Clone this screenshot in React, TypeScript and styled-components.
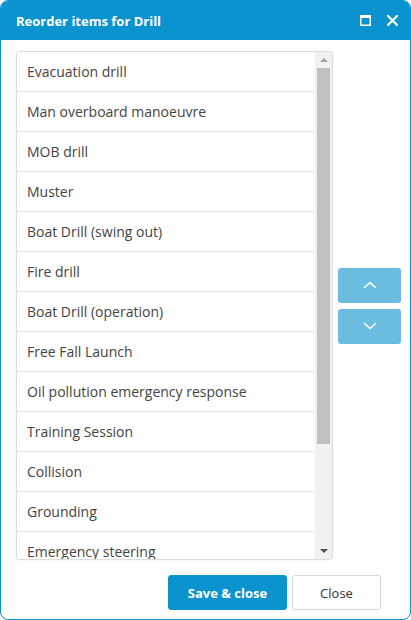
import React from "react";
import styled, { createGlobalStyle } from "styled-components";

const GlobalStyle = createGlobalStyle`
  html, body {
    margin: 0;
    padding: 0;
    background: #ffffff;
  }
  body {
    font-family: "Open Sans", "Liberation Sans", sans-serif;
  }
`;

const Window = styled.div`
  width: 411px;
  height: 620px;
  box-sizing: border-box;
  border: 1px solid #0b93d0;
  border-radius: 8px;
  overflow: hidden;
  display: flex;
  flex-direction: column;
  background: #ffffff;
`;

const Header = styled.div`
  height: 39px;
  background-color: #0b93d0;
  display: flex;
  align-items: center;
  padding: 0 12px 0 15px;
  color: #ffffff;
`;

const Title = styled.span`
  flex: 1;
  font-size: 13px;
  font-weight: 700;
`;

const HeaderIcons = styled.div`
  display: flex;
  align-items: center;
  gap: 16px;
  svg {
    display: block;
  }
`;

const Body = styled.div`
  display: flex;
  align-items: center;
  gap: 5px;
  padding: 11px 9px 0 15px;
`;

const ListBox = styled.div`
  width: 317px;
  height: 509px;
  box-sizing: border-box;
  border: 1px solid #dcdcdc;
  border-radius: 3px;
  display: flex;
  overflow: hidden;
  box-shadow: 0 1px 2px rgba(0, 0, 0, 0.04);
`;

const Items = styled.ul`
  flex: 1;
  margin: 0;
  padding: 0;
  list-style: none;
  overflow: hidden;
`;

const Item = styled.li`
  height: 40px;
  box-sizing: border-box;
  border-bottom: 1px solid #e3e3e3;
  display: flex;
  align-items: center;
  padding: 0 0 1px 10px;
  font-size: 14px;
  color: #444444;
  white-space: nowrap;
`;

const ScrollTrack = styled.div`
  width: 17px;
  background: #f1f1f1;
  display: flex;
  flex-direction: column;
  align-items: center;
`;

const ScrollArrow = styled.div<{ down?: boolean }>`
  height: 16px;
  width: 100%;
  display: flex;
  align-items: center;
  justify-content: center;
  &::after {
    content: "";
    border-left: 4px solid transparent;
    border-right: 4px solid transparent;
    ${(props) =>
      props.down
        ? "border-top: 4px solid #505050;"
        : "border-bottom: 4px solid #a3a3a3;"}
  }
`;

const ScrollThumb = styled.div`
  width: 13px;
  height: 376px;
  background: #c1c1c1;
`;

const ScrollRest = styled.div`
  flex: 1;
`;

const MoveButtons = styled.div`
  display: flex;
  flex-direction: column;
  gap: 6px;
`;

const MoveButton = styled.button`
  width: 63px;
  height: 35px;
  border: none;
  border-radius: 3px;
  background: #6bbddf;
  display: flex;
  align-items: center;
  justify-content: center;
  padding: 0;
  cursor: pointer;
  svg {
    display: block;
  }
`;

const Footer = styled.div`
  display: flex;
  justify-content: flex-end;
  gap: 5px;
  padding: 15px 29px 0 0;
`;

const FooterButton = styled.button<{ primary?: boolean }>`
  height: 35px;
  box-sizing: border-box;
  border-radius: 3px;
  font-family: "Open Sans", "Liberation Sans", sans-serif;
  font-size: 13px;
  font-weight: ${(props) => (props.primary ? 700 : 400)};
  color: ${(props) => (props.primary ? "#ffffff" : "#333333")};
  background: ${(props) => (props.primary ? "#0b93d0" : "#ffffff")};
  border: 1px solid ${(props) => (props.primary ? "#0b93d0" : "#d6d6d6")};
  padding: 0;
  width: ${(props) => (props.primary ? "119px" : "89px")};
  cursor: pointer;
`;

const drills = [
  "Evacuation drill",
  "Man overboard manoeuvre",
  "MOB drill",
  "Muster",
  "Boat Drill (swing out)",
  "Fire drill",
  "Boat Drill (operation)",
  "Free Fall Launch",
  "Oil pollution emergency response",
  "Training Session",
  "Collision",
  "Grounding",
  "Emergency steering",
];

function App() {
  return (
    <>
      <GlobalStyle />
      <Window>
        <Header>
          <Title>Reorder items for Drill</Title>
          <HeaderIcons>
            <svg width="11" height="11" viewBox="0 0 11 11">
              <rect x="0.75" y="0.75" width="9.5" height="9.5" fill="none" stroke="#fff" strokeWidth="1.5" />
              <rect x="0" y="0" width="11" height="3" fill="#fff" />
            </svg>
            <svg width="11" height="11" viewBox="0 0 11 11">
              <path d="M1 1L10 10M10 1L1 10" stroke="#fff" strokeWidth="2.2" strokeLinecap="square" />
            </svg>
          </HeaderIcons>
        </Header>
        <Body>
          <ListBox>
            <Items>
              {drills.map((name) => (
                <Item key={name}>{name}</Item>
              ))}
            </Items>
            <ScrollTrack>
              <ScrollArrow />
              <ScrollThumb />
              <ScrollRest />
              <ScrollArrow down />
            </ScrollTrack>
          </ListBox>
          <MoveButtons>
            <MoveButton>
              <svg width="14" height="8" viewBox="0 0 14 8">
                <path d="M1 7L7 1.5L13 7" fill="none" stroke="#fff" strokeWidth="1.6" />
              </svg>
            </MoveButton>
            <MoveButton>
              <svg width="14" height="8" viewBox="0 0 14 8">
                <path d="M1 1L7 6.5L13 1" fill="none" stroke="#fff" strokeWidth="1.6" />
              </svg>
            </MoveButton>
          </MoveButtons>
        </Body>
        <Footer>
          <FooterButton primary>Save &amp; close</FooterButton>
          <FooterButton>Close</FooterButton>
        </Footer>
      </Window>
    </>
  );
}

export default App;
